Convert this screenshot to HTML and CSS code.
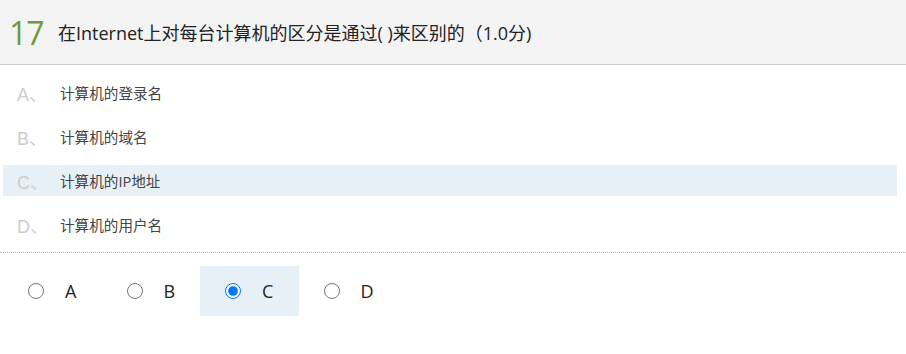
FILE: index.html
```html
<!DOCTYPE html>
<html lang="zh">
<head>
<meta charset="utf-8">
<link rel="stylesheet" href="styles.css">
</head>
<body>
<div class="question">
  <div class="q-head">
    <span class="q-num">17</span>
    <span class="q-title">在Internet上对每台计算机的区分是通过( )来区别的（1.0分)</span>
  </div>
  <ul class="options">
    <li class="option"><span class="opt-letter">A、</span><span class="opt-text">计算机的登录名</span></li>
    <li class="option"><span class="opt-letter">B、</span><span class="opt-text">计算机的域名</span></li>
    <li class="option selected"><span class="opt-letter">C、</span><span class="opt-text">计算机的IP地址</span></li>
    <li class="option"><span class="opt-letter">D、</span><span class="opt-text">计算机的用户名</span></li>
  </ul>
  <div class="answers">
    <label class="answer"><input type="radio" name="ans" class="radio"><span class="ans-letter">A</span></label>
    <label class="answer"><input type="radio" name="ans" class="radio"><span class="ans-letter">B</span></label>
    <label class="answer checked"><input type="radio" name="ans" class="radio" checked><span class="ans-letter">C</span></label>
    <label class="answer"><input type="radio" name="ans" class="radio"><span class="ans-letter">D</span></label>
  </div>
</div>
</body>
</html>
```

FILE: styles.css
```css
html, body {
  margin: 0;
  padding: 0;
  background: #fff;
}
body {
  font-family: "Open Sans", "Noto Sans CJK SC", sans-serif;
  color: #333;
}
.q-head {
  height: 65px;
  background: #f3f3f3;
  border-bottom: 1px solid #cccccc;
  display: flex;
  align-items: center;
  padding-left: 9px;
  box-sizing: border-box;
}
.q-num {
  font-size: 32px;
  color: #6f9a3a;
  font-weight: 400;
  letter-spacing: -1px;
  width: 49px;
  line-height: 1;
  margin-top: 2px;
}
.q-title {
  font-size: 18px;
  color: #222;
}
.options {
  list-style: none;
  margin: 0;
  padding: 12px 9px 12px 3px;
  display: flex;
  flex-direction: column;
  gap: 13px;
  border-bottom: 1px dotted #b5b5b5;
}
.option {
  height: 31px;
  display: flex;
  align-items: center;
  padding-left: 14px;
  font-size: 14px;
}
.option.selected {
  background: #e8f0f7;
}
.opt-letter {
  width: 43px;
  color: #cccccc;
  font-family: "Liberation Sans", "Noto Sans CJK SC", sans-serif;
  font-size: 18px;
  font-weight: 400;
}
.opt-text {
  color: #444;
  font-size: 14.6px;
}
.answers {
  display: flex;
  padding: 13px 0 0 3px;
}
.answer {
  width: 98.5px;
  height: 50px;
  display: flex;
  align-items: center;
  box-sizing: border-box;
  padding-left: 25px;
}
.answer.checked {
  background: #e8f0f7;
}
.radio {
  width: 16px;
  height: 16px;
  margin: 0;
}
.ans-letter {
  margin-left: 21px;
  font-size: 18px;
  color: #222;
}
```
